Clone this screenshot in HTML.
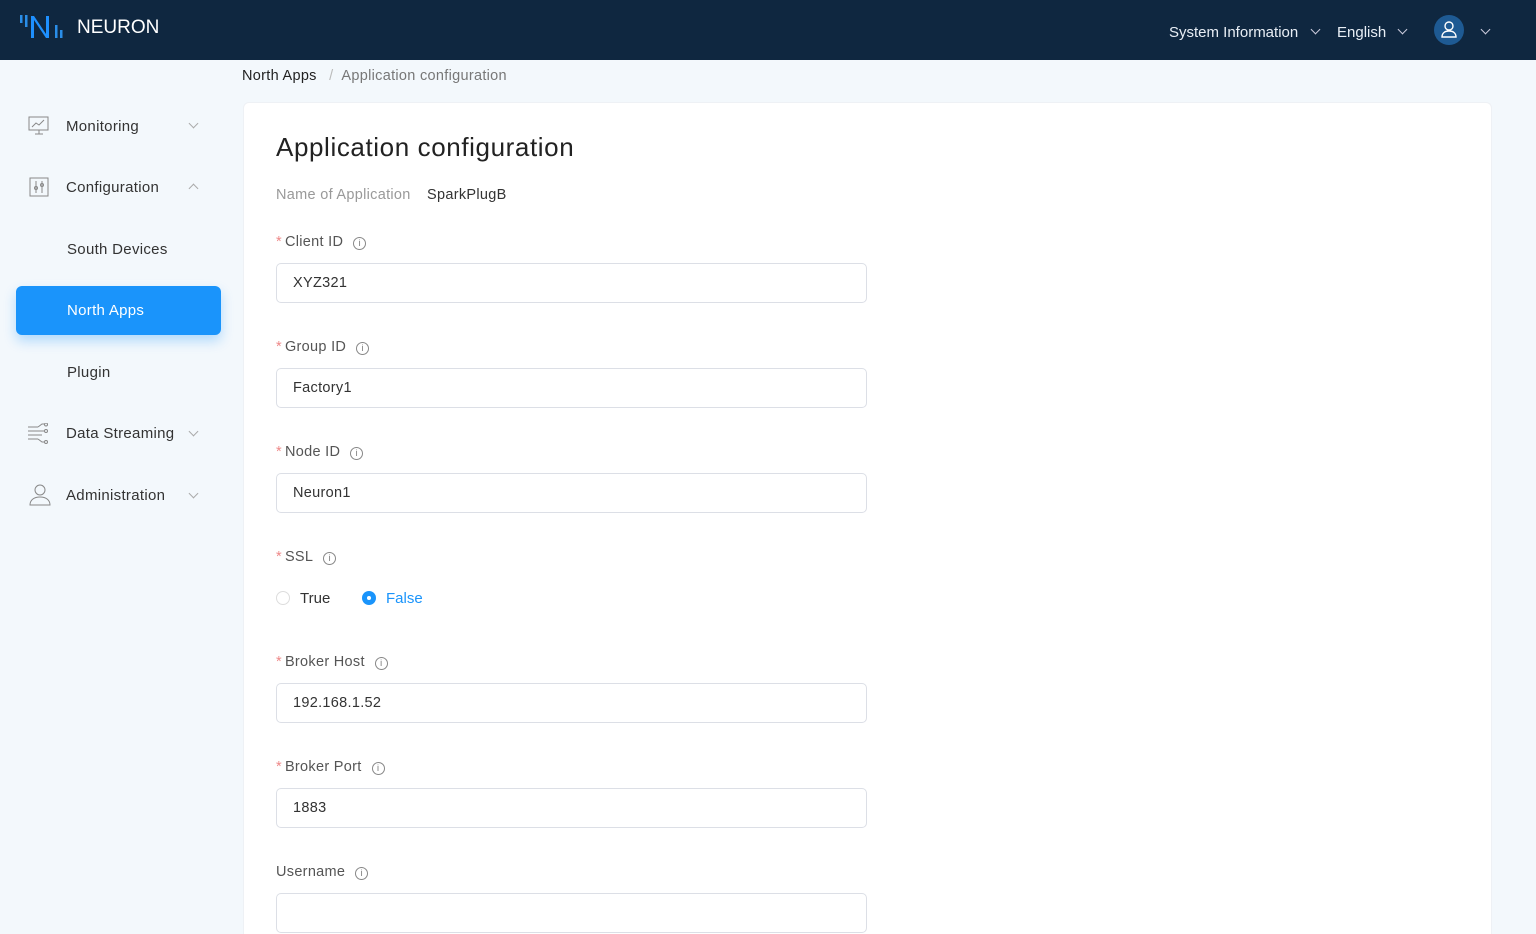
<!DOCTYPE html>
<html><head><meta charset="utf-8"><style>
*{box-sizing:border-box;margin:0;padding:0}
html,body{width:1536px;height:934px;overflow:hidden}
body{background:#f3f8fc;font-family:"Liberation Sans",sans-serif;position:relative}
.hdr{position:absolute;left:0;top:0;width:1536px;height:60px;background:#0f2740;color:#fff}
.abs{position:absolute}
.nav{position:absolute;left:66px;font-size:15px;color:#333;letter-spacing:.3px}
.chev{position:absolute;left:190px;width:7px;height:7px;border-right:1px solid #aaa;border-bottom:1px solid #aaa;transform:rotate(45deg)}
.card{position:absolute;left:243px;top:102px;width:1249px;height:832px;background:#fff;border-radius:6px 6px 0 0;border:1px solid #eef1f5;border-bottom:none}
.lbl{position:absolute;left:276px;font-size:14.5px;color:#555;letter-spacing:.3px}
.lbl .s{color:#e88;margin-right:3px}
.info{display:inline-block;width:13px;height:13px;border:1px solid #888;border-radius:50%;margin-left:10px;vertical-align:0px;font-size:9px;line-height:11px;text-align:center;color:#777}
.inp{position:absolute;left:276px;width:591px;height:40px;border:1px solid #dcdfe6;border-radius:5px;padding-left:16px;line-height:38px;font-size:14.5px;color:#333;letter-spacing:.3px}
</style></head><body>
<div class="hdr">
 <svg class="abs" style="left:18px;top:13px" width="50" height="28" viewBox="0 0 50 28">
  <rect x="2" y="2" width="2.5" height="8" fill="#2a8ee8"/><rect x="7" y="2" width="2.5" height="12" fill="#2a8ee8"/>
  <path d="M13 25V3h3l12 18V3h3v22h-3L16 7v18z" fill="#1e90ff"/>
  <rect x="37" y="12" width="2.5" height="13" fill="#2a8ee8"/><rect x="42" y="17" width="2.5" height="8" fill="#2a8ee8"/>
 </svg>
 <div class="abs" style="left:77px;top:17px;font-size:19px;color:#fff">NEURON</div>
 <div class="abs" style="left:1169px;top:24px;font-size:15px;color:#e8eef5">System Information</div>
 <div class="abs" style="left:1312px;top:26px;width:7px;height:7px;border-right:1px solid #ccd;border-bottom:1px solid #ccd;transform:rotate(45deg)"></div>
 <div class="abs" style="left:1337px;top:24px;font-size:15px;color:#e8eef5">English</div>
 <div class="abs" style="left:1399px;top:26px;width:7px;height:7px;border-right:1px solid #ccd;border-bottom:1px solid #ccd;transform:rotate(45deg)"></div>
 <div class="abs" style="left:1434px;top:15px;width:30px;height:30px;border-radius:50%;background:#1e5a93"></div>
 <svg class="abs" style="left:1439px;top:19px" width="20" height="20" viewBox="0 0 20 20" fill="none" stroke="#fff" stroke-width="1.4"><circle cx="10" cy="7" r="4"/><path d="M3 18c0-4 3-6 7-6s7 2 7 6z"/></svg>
 <div class="abs" style="left:1482px;top:26px;width:7px;height:7px;border-right:1px solid #ccd;border-bottom:1px solid #ccd;transform:rotate(45deg)"></div>
</div>

<svg class="abs" style="left:28px;top:116px" width="22" height="20" viewBox="0 0 22 20" fill="none" stroke="#888" stroke-width="1"><rect x="1" y="1" width="19" height="13"/><path d="M4 11l4-4 3 2 5-5M7 18h8M11 14v4"/></svg>
<div class="nav" style="top:118px">Monitoring</div><div class="chev" style="top:120px"></div>
<svg class="abs" style="left:29px;top:177px" width="20" height="20" viewBox="0 0 20 20" fill="none" stroke="#888" stroke-width="1"><rect x="1" y="1" width="18" height="18"/><path d="M7 4v12M13 4v12"/><circle cx="7" cy="11" r="1.5"/><circle cx="13" cy="8" r="1.5"/></svg>
<div class="nav" style="top:179px">Configuration</div><div class="chev" style="top:185px;transform:rotate(225deg)"></div>
<div class="nav" style="left:67px;top:241px">South Devices</div>
<div class="abs" style="left:16px;top:286px;width:205px;height:49px;background:#1a94fb;border-radius:6px;box-shadow:0 6px 12px rgba(26,148,251,.3)"></div>
<div class="nav" style="left:67px;top:302px;color:#fff">North Apps</div>
<div class="nav" style="left:67px;top:364px">Plugin</div>
<svg class="abs" style="left:27px;top:423px" width="24" height="22" viewBox="0 0 24 22" fill="none" stroke="#888" stroke-width="1"><path d="M1 4h10M1 8h14M1 12h14M1 16h10M11 4l4-3h2M15 8h2M11 16l4 3h2"/><circle cx="19" cy="1.5" r="1.5"/><circle cx="19" cy="8" r="1.5"/><circle cx="19" cy="19" r="1.5"/></svg>
<div class="nav" style="top:425px">Data Streaming</div><div class="chev" style="top:428px"></div>
<svg class="abs" style="left:29px;top:484px" width="22" height="22" viewBox="0 0 22 22" fill="none" stroke="#888" stroke-width="1"><circle cx="11" cy="6" r="5"/><path d="M1 21c0-5 4-8 10-8s10 3 10 8z"/></svg>
<div class="nav" style="top:487px">Administration</div><div class="chev" style="top:490px"></div>

<div class="abs" style="left:242px;top:68px;font-size:14.5px;color:#222;letter-spacing:.3px">North Apps <span style="color:#bbb;margin:0 8px">/</span><span style="color:#777">Application configuration</span></div>

<div class="card"></div>
<div class="abs" style="left:276px;top:132px;font-size:26px;color:#222;letter-spacing:.6px">Application configuration</div>
<div class="abs" style="left:276px;top:187px;font-size:14.5px;color:#999;letter-spacing:.3px">Name of Application <span style="color:#333;margin-left:12px">SparkPlugB</span></div>

<div class="lbl" style="top:234px"><span class="s">*</span>Client ID<span class="info">i</span></div>
<div class="inp" style="top:263px">XYZ321</div>
<div class="lbl" style="top:339px"><span class="s">*</span>Group ID<span class="info">i</span></div>
<div class="inp" style="top:368px">Factory1</div>
<div class="lbl" style="top:444px"><span class="s">*</span>Node ID<span class="info">i</span></div>
<div class="inp" style="top:473px">Neuron1</div>
<div class="lbl" style="top:549px"><span class="s">*</span>SSL<span class="info">i</span></div>
<div class="abs" style="left:276px;top:591px;width:14px;height:14px;border:1px solid #ddd;border-radius:50%"></div>
<div class="abs" style="left:300px;top:590px;font-size:15px;color:#333">True</div>
<div class="abs" style="left:362px;top:591px;width:14px;height:14px;background:#1a94fb;border-radius:50%"><div style="margin:5px;width:4px;height:4px;background:#fff;border-radius:50%"></div></div>
<div class="abs" style="left:386px;top:590px;font-size:15px;color:#1a94fb">False</div>
<div class="lbl" style="top:654px"><span class="s">*</span>Broker Host<span class="info">i</span></div>
<div class="inp" style="top:683px">192.168.1.52</div>
<div class="lbl" style="top:759px"><span class="s">*</span>Broker Port<span class="info">i</span></div>
<div class="inp" style="top:788px">1883</div>
<div class="lbl" style="top:864px">Username<span class="info">i</span></div>
<div class="inp" style="top:893px"></div>
</body></html>
